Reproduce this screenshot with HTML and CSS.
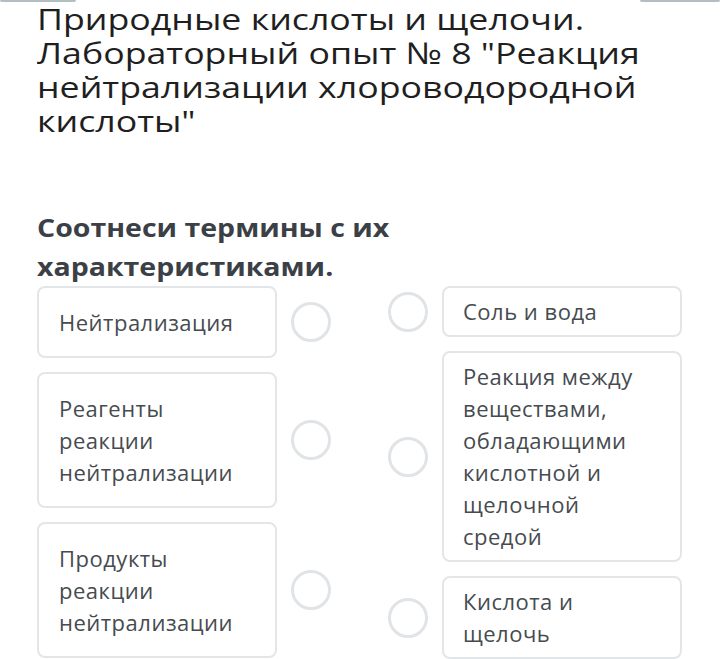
FILE: index.html
```html
<!doctype html>
<html lang="ru">
<head>
	<meta charset="UTF-8">
	<title>Соотнеси термины</title>
	<link rel="stylesheet" href="styles.css">
</head>
<body>
<div class="topbar">
	<div class="tab"></div>
	<div class="tab"></div>
</div>
<div class="page">
	<h1 class="title">Природные кислоты и щелочи. Лабораторный опыт № 8 "Реакция нейтрализации хлороводородной кислоты"</h1>

	<h2 class="task">Соотнеси термины с их характеристиками.</h2>

	<div class="match">
		<div class="col">
			<div class="row">
				<div class="card left">Нейтрализация</div>
				<span class="dot"></span>
			</div>
			<div class="row">
				<div class="card left">Реагенты реакции нейтрализации</div>
				<span class="dot"></span>
			</div>
			<div class="row">
				<div class="card left">Продукты реакции нейтрализации</div>
				<span class="dot"></span>
			</div>
		</div>

		<div class="col">
			<div class="row">
				<span class="dot"></span>
				<div class="card right">Соль и вода</div>
			</div>
			<div class="row">
				<span class="dot"></span>
				<div class="card right">Реакция между веществами, обладающими кислотной и щелочной средой</div>
			</div>
			<div class="row">
				<span class="dot"></span>
				<div class="card right">Кислота и щелочь</div>
			</div>
		</div>
	</div>
</div>
</body>
</html>
```

FILE: styles.css
```css
body{
	margin: 0;
	background: #fff;
	font-family: "Open Sans", "Noto Sans", sans-serif;
	overflow: hidden;
}
.topbar{
	display: flex;
	justify-content: space-between;
	height: 2px;
}
.tab{
	width: 76px;
	background: #b3bec2;
	border-radius: 0 0 2px 2px;
}
.tab:last-child{
	width: 80px;
}
.page{
	padding: 0 37px;
}
/* the app draws the headings a little wide */
.title{
	margin: 0;
	font-size: 30px;
	font-weight: 400;
	line-height: 34px;
	color: #1f1f1f;
	width: 520px;
	transform: scaleX(1.19);
	transform-origin: 0 0;
}
.task{
	margin: 70px 0 0;
	font-size: 25px;
	font-weight: 700;
	line-height: 39px;
	color: #3b4046;
	width: 380px;
	transform: scaleX(1.14);
	transform-origin: 0 0;
}
.match{
	display: flex;
	gap: 57px;
}
.col{
	display: flex;
	flex-direction: column;
	gap: 14px;
}
.row{
	display: flex;
	align-items: center;
	gap: 14px;
}
.card{
	box-sizing: border-box;
	width: 240px;
	border: 2px solid #e3e6e9;
	border-radius: 8px;
	font-size: 22px;
	line-height: 32px;
	letter-spacing: 0.5px;
	color: #464b50;
}
.left{
	padding: 18px 32px 18px 20px;
}
.right{
	padding: 7px 32px 8px 19px;
}
.dot{
	box-sizing: border-box;
	width: 40px;
	height: 40px;
	border: 3px solid #e1e4e7;
	border-radius: 50%;
	flex: none;
}
```
